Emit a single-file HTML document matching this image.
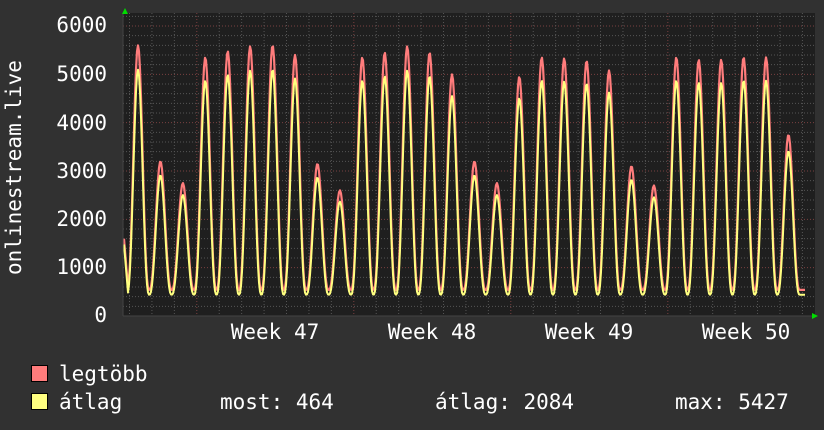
<!DOCTYPE html>
<html><head><meta charset="utf-8"><style>
html,body{margin:0;padding:0;background:#313131;overflow:hidden}
svg{display:block}
text{font-family:"DejaVu Sans Mono","Liberation Mono",monospace;font-size:21px;fill:#fff}
</style></head><body>
<svg id="g" width="824" height="430" xmlns="http://www.w3.org/2000/svg">
<rect width="824" height="430" fill="#313131"/>
<rect x="123" y="13" width="692" height="303" fill="#1f1f1f"/>
<g id="grid"></g>
<path id="red" fill="none" stroke="#ff7c7c" stroke-width="2.2" stroke-linejoin="round"/>
<path id="yel" fill="none" stroke="#ffff80" stroke-width="2" stroke-linejoin="round"/>
<line x1="123" y1="316" x2="815" y2="316" stroke="#444" stroke-width="1"/>
<line x1="123" y1="13" x2="123" y2="316" stroke="#444" stroke-width="1"/>
<polygon points="122,14 125,8 128,14" fill="#00dd00"/>
<polygon points="812,313 818,316 812,319" fill="#00dd00"/>
<text x="107" y="32" text-anchor="end">6000</text>
<text x="107" y="81" text-anchor="end">5000</text>
<text x="107" y="130" text-anchor="end">4000</text>
<text x="107" y="178" text-anchor="end">3000</text>
<text x="107" y="226" text-anchor="end">2000</text>
<text x="107" y="274" text-anchor="end">1000</text>
<text x="107" y="322" text-anchor="end">0</text>
<text transform="translate(21,275) rotate(-90)">onlinestream.live</text>
<text x="275" y="339" text-anchor="middle">Week 47</text>
<text x="432" y="339" text-anchor="middle">Week 48</text>
<text x="589" y="339" text-anchor="middle">Week 49</text>
<text x="746" y="339" text-anchor="middle">Week 50</text>
<rect x="31.5" y="365.5" width="16" height="16" fill="#ff7c7c" stroke="#000"/>
<rect x="31.5" y="393.5" width="16" height="16" fill="#ffff80" stroke="#000"/>
<text x="59" y="381">legtöbb</text>
<text x="59" y="409">átlag</text>
<text x="220" y="409">most: 464</text>
<text x="435" y="409">átlag: 2084</text>
<text x="675" y="409">max: 5427</text>
</svg>
<script>
var g=document.getElementById('grid'),s='';
function Y(v){return 316-v*0.04833;}
for(var v=200;v<=6200;v+=200){var y=Y(v);if(y<13)break;var maj=v%1000==0;
s+='<line x1="123" x2="815" y1="'+y+'" y2="'+y+'" stroke="'+(maj?'#7a4040':'#555')+'" stroke-dasharray="1,2"/>';}
for(var x=129.5;x<815;x+=22.43){var m=((x-197)%157+157)%157;var maj=m<2||m>155;
s+='<line y1="13" y2="316" x1="'+x+'" x2="'+x+'" stroke="'+(maj?'#7a4040':'#555')+'" stroke-dasharray="1,2"/>';}
g.innerHTML=s;
var P=[5600,3200,2750,5350,5480,5580,5600,5400,3150,2600,5350,5450,5580,5450,5000,3200,2750,4950,5350,5330,5280,5080,3100,2700,5350,5300,5300,5350,5350,3750];
var r='',yl='';
for(var x=124;x<=805;x+=1){var d=(x-138)/22.43;var i=Math.round(d);var t=d-i;
if(i<0)i=0;var f;var pk;
if(i>29){pk=P[29];f=0;}else{pk=P[i];f=Math.pow(Math.max(0,Math.cos(Math.PI*t)),2.6);}
var mn=540;
var v=mn+(pk-mn)*f;var vy=440+(pk*0.91-440)*f;
if(x<128){v=1600-(x-124)*250;vy=v-120;}
r+=(x==124?'M':'L')+x+','+Y(v).toFixed(1);yl+=(x==124?'M':'L')+x+','+Y(vy).toFixed(1);}
document.getElementById('red').setAttribute('d',r);
document.getElementById('yel').setAttribute('d',yl);
</script>
</body></html>
